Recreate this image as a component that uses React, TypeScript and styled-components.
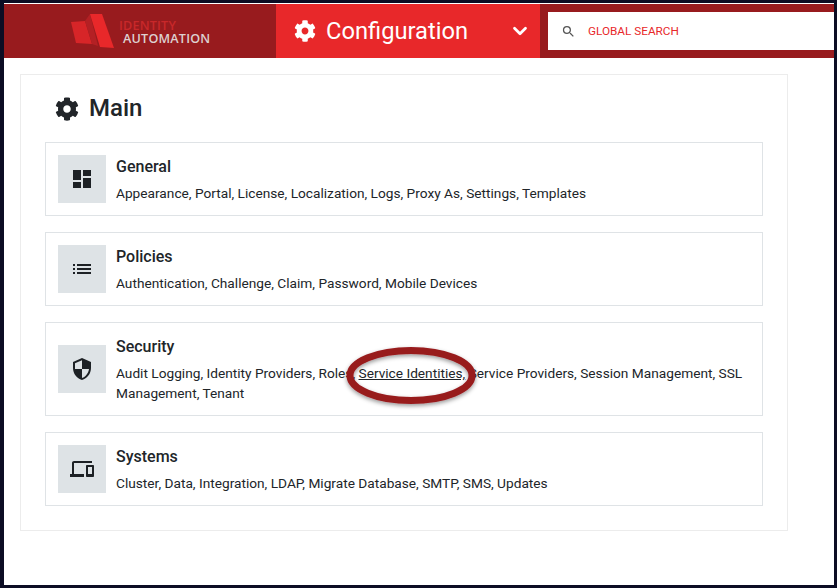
import React from "react";
import styled, { createGlobalStyle } from "styled-components";
import { FaCog } from "react-icons/fa";
import { MdDashboard, MdList, MdSecurity, MdDevices, MdSearch } from "react-icons/md";
import { ChevronDown } from "lucide-react";

const Global = createGlobalStyle`
  html, body { margin: 0; padding: 0; height: 100%; background: #0c0d24; overflow: hidden; }
  body { font-family: Roboto, "Liberation Sans", sans-serif; color: #212529; }
`;

const Frame = styled.div`
  position: relative;
  box-sizing: border-box;
  width: 830px;
  height: 582px;
  margin: 3px 0 0 4px;
  padding-top: 1px;
  background: #fff;
`;

const Header = styled.header`
  display: flex;
  height: 54px;
  background: #981b1e;
`;

const LogoArea = styled.div`
  width: 272px;
  flex: none;
  display: flex;
  align-items: center;
  padding-left: 67px;
  box-sizing: border-box;
`;

const LogoText = styled.div`
  margin: 2px 0 0 4px;
  font-family: "Open Sans", Lato, sans-serif;
  font-weight: 600;
  font-size: 12.6px;
  line-height: 13px;
  letter-spacing: 0.2px;
`;

const LogoLine = styled.div<{ $color: string; $indent?: number }>`
  color: ${(p) => p.$color};
  margin-left: ${(p) => p.$indent ?? 0}px;
`;

const ConfigButton = styled.div`
  width: 264px;
  flex: none;
  box-sizing: border-box;
  padding: 0 9px 0 18px;
  display: flex;
  align-items: center;
  background: #e8282a;
  color: #fff;
  font-size: 23.7px;
`;

const ConfigLabel = styled.span`
  margin-left: 10px;
  flex: 1;
`;

const SearchBox = styled.div`
  flex: 1;
  margin: 8px 0 8px 8px;
  background: #fff;
  display: flex;
  align-items: center;
  padding-left: 13px;
`;

const SearchLabel = styled.span`
  margin-left: 12px;
  color: #e8282a;
  font-size: 11.75px;
`;

const Content = styled.main`
  padding: 16px 46px 0 16px;
`;

const Panel = styled.section`
  box-sizing: border-box;
  height: 457px;
  border: 1px solid #ececec;
  padding: 19px 24px 0;
`;

const Heading = styled.h1`
  margin: 0 0 19px 10px;
  display: flex;
  align-items: center;
  height: 29px;
  font-size: 24px;
  line-height: 29px;
  font-weight: 500;
  color: #212529;
`;

const HeadingLabel = styled.span`
  margin-left: 10px;
`;

const Card = styled.article`
  box-sizing: border-box;
  display: flex;
  align-items: center;
  border: 1px solid #dfe3e6;
  padding: 12px;
  margin-bottom: 16px;
`;

const IconBox = styled.div`
  width: 48px;
  height: 48px;
  flex: none;
  display: flex;
  align-items: center;
  justify-content: center;
  background: #dee3e6;
  color: #1d2125;
  font-size: 24px;
`;

const CardBody = styled.div`
  margin-left: 10px;
  align-self: flex-start;
`;

const CardTitle = styled.h2`
  margin: 2px 0 6px;
  font-size: 16px;
  line-height: 20px;
  font-weight: 500;
  color: #212529;
`;

const CardLinks = styled.p`
  margin: 0;
  font-size: 13.7px;
  line-height: 20px;
  color: #212529;
`;

const Underlined = styled.span`
  text-decoration: underline;
`;

const Oval = styled.svg`
  position: absolute;
  left: 333.5px;
  top: 338.5px;
  width: 146px;
  height: 72px;
  pointer-events: none;
`;

const LogoMark = () => (
  <svg width="44" height="36" viewBox="0 0 44 36" aria-hidden="true">
    <polygon points="0,9 14,8 21,31 5,30" fill="#d72528" />
    <polygon points="14,8 19,1 27,33 21,31" fill="#b42024" />
    <polygon points="19,1 31,1 43,35 29,34" fill="#e8282a" />
  </svg>
);

const cards = [
  { title: "General", icon: <MdDashboard />, links: <>Appearance, Portal, License, Localization, Logs, Proxy As, Settings, Templates</> },
  { title: "Policies", icon: <MdList />, links: <>Authentication, Challenge, Claim, Password, Mobile Devices</> },
  {
    title: "Security",
    icon: <MdSecurity />,
    links: (
      <>
        Audit Logging, Identity Providers, Roles, <Underlined>Service Identities,</Underlined> Service Providers, Session Management, SSL Management, Tenant
      </>
    ),
  },
  { title: "Systems", icon: <MdDevices />, links: <>Cluster, Data, Integration, LDAP, Migrate Database, SMTP, SMS, Updates</> },
];

export default function App() {
  return (
    <>
      <Global />
      <Frame>
        <Header>
          <LogoArea>
            <LogoMark />
            <LogoText>
              <LogoLine $color="#c8282a">IDENTITY</LogoLine>
              <LogoLine $color="#ddd0d0" $indent={4}>AUTOMATION</LogoLine>
            </LogoText>
          </LogoArea>
          <ConfigButton>
            <FaCog size={22} />
            <ConfigLabel>Configuration</ConfigLabel>
            <ChevronDown size={22} strokeWidth={3} />
          </ConfigButton>
          <SearchBox>
            <MdSearch size={15} color="#555" />
            <SearchLabel>GLOBAL SEARCH</SearchLabel>
          </SearchBox>
        </Header>
        <Content>
          <Panel>
            <Heading>
              <FaCog size={24} />
              <HeadingLabel>Main</HeadingLabel>
            </Heading>
            {cards.map((c) => (
              <Card key={c.title}>
                <IconBox>{c.icon}</IconBox>
                <CardBody>
                  <CardTitle>{c.title}</CardTitle>
                  <CardLinks>{c.links}</CardLinks>
                </CardBody>
              </Card>
            ))}
          </Panel>
        </Content>
        <Oval viewBox="0 0 146 72" aria-hidden="true">
          <defs>
            <filter id="ovalShadow" x="-10%" y="-20%" width="120%" height="150%">
              <feDropShadow dx="0" dy="2" stdDeviation="2" floodColor="#000" floodOpacity="0.4" />
            </filter>
          </defs>
          <ellipse cx="73" cy="33.5" rx="61" ry="25" fill="none" stroke="#981b1e" strokeWidth="7" filter="url(#ovalShadow)" />
        </Oval>
      </Frame>
    </>
  );
}
